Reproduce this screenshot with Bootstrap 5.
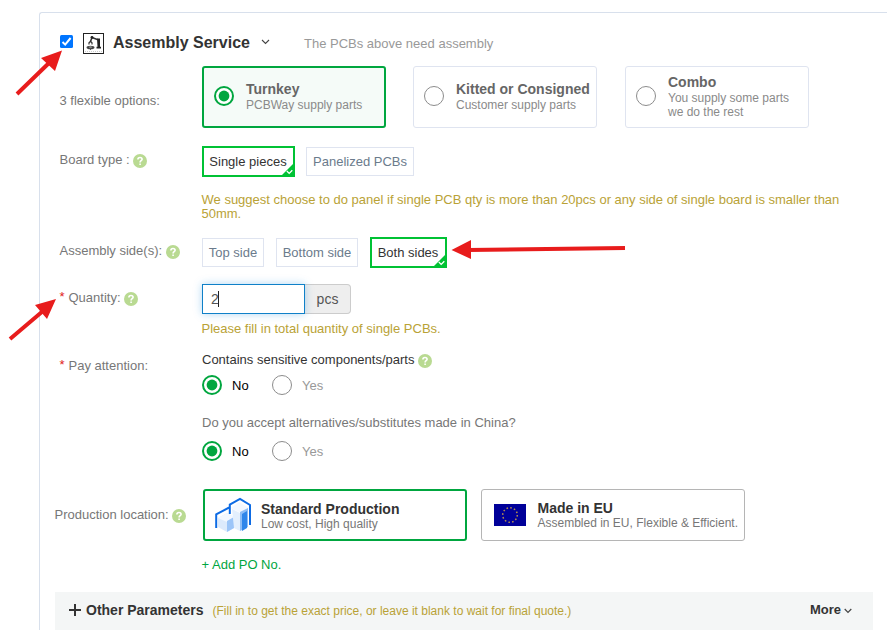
<!DOCTYPE html>
<html lang="en">
<head>
<meta charset="utf-8">
<meta name="viewport" content="width=device-width, initial-scale=1">
<title>Assembly Service</title>
<link href="https://cdn.jsdelivr.net/npm/bootstrap@5.3.0/dist/css/bootstrap.min.css" rel="stylesheet">
<style>
body{font-family:"Liberation Sans",Arial,sans-serif;font-size:13px;line-height:14px;color:#777;background:#fff;height:630px}
.panel{margin:12px 0 0 39px;height:618px;border:1px solid #d8e0ec;border-width:1px 0 0 1px;border-top-left-radius:3px}
.head{height:53px;padding:6px 0 0 20px}
.tickbox{width:13px;height:13px;margin:-3px 10px 0 0}
.robot{margin-top:1px}
.head h1{font-size:16px;line-height:20px;color:#333;margin:0 11px 0 9px}
.headchev{margin-top:-1px}
.note{color:#999;margin:2px 0 0 34px}
.line{padding-left:19.5px}
.lbl{width:142.5px;flex:none}
.help{width:14px;height:14px;margin-left:3.5px;flex:none}
.lbl .help{margin-top:2px}
.req{color:#e02020;width:9px;line-height:12px}
.opt-lbl{padding-top:28px}
.opts{gap:27px}
.opts .opt+.opt+.opt{margin-left:1px}
.opt{width:184px;height:62px;border:1px solid #dfe4f0;border-radius:3px;font-size:12px;padding-left:10px;color:#8a8a8a}
.opt.on{border:2px solid #00a63f;background:#f5fbf8}
.opt b{display:block;font-size:14px;line-height:16px;height:17px;color:#666}
.opt .dot{margin-bottom:2px}
.tx{margin:0 0 1px 12px}
.dot{width:20px;height:20px;flex:none}
.pick{height:29px;border:1px solid #dfe4f0;color:#6b7b8c;white-space:nowrap}
.pick.on{height:31px;border:2px solid #00c234;color:#333;padding-right:1px}
.pick svg{right:-1px;bottom:-1px;width:13px;height:13px}
.w93{width:93px}.w108{width:108px}.w62{width:62px}.w82{width:82px}.w77{width:77px}
.board{margin-top:18px}
.board .pick+.pick{margin-left:11px}
.board .lbl,.sides .lbl{margin-top:-2px}
.quantity .lbl{margin-top:-1px}
.board .help,.sides .help,.quantity .help{margin-top:1px}
.first{margin:16px 0 0 161.5px}
.sides{margin-top:16px}
.sides .pick+.pick{margin-left:12px}
.hint{color:#b9a236}
.quantity{margin-top:16px}
.qty{width:103px;height:30px;border:1px solid #0f80c8;box-shadow:0 0 8px rgba(30,140,220,.35);color:#555;font-size:14px;padding-left:8px;z-index:1}
.caret{width:1px;height:16px;background:#222;margin-left:-1px}
.unit{width:46px;height:30px;border:1px solid #ccc;border-left:0;border-radius:0 4px 4px 0;background:#eee;color:#555;font-size:14px}
.second{margin:8px 0 0 161.5px}
.attention{margin-top:17px}
.attention>.lbl{padding-top:6px}
.dark{color:#333}
.attention .help{margin-top:1px;margin-bottom:-1px}
.radios{margin-top:8px;color:#999}
.choice{width:70px;height:20px}
.choice span{margin:1px 0 0 10px}
.ask{margin-top:21px}
.second-set{margin-top:11px}
.production{margin-top:28px;padding-left:14.5px}
.production .lbl{width:148.5px}
.production .lbl .help{margin-top:1px}
.loc{width:264px;height:52px;border:1px solid #b5b5b5;border-radius:3px;font-size:12px;color:#777;white-space:nowrap}
.loc.on{border:2px solid #00a63f}
.loc b{display:block;font-size:14px;line-height:16px;color:#333}
.loc svg{margin:0 10px}
.loc.on div{margin-top:1px}
.eu{margin-left:14px}
.eu svg{margin:0 12px}
.eu div{margin-left:-.5px}
.po{margin:17px 0 0 161.5px;color:#00a63f}
.bar{margin:20px 14px 0 15px;height:38px;background:#f4f6f6;padding:0 21px 2px 14px;color:#333}
.bar b{font-size:14px}
.bar .op{margin-left:4px}
.fill{font-size:12px;margin:1px 0 0 9px}
.bar .more{font-size:13px}
.mchev{margin:1px 0 0 3px}
.arrows{left:0;top:0;width:887px;height:630px;z-index:5;pointer-events:none}
</style>
<script src="https://cdn.jsdelivr.net/npm/bootstrap@5.3.0/dist/js/bootstrap.bundle.min.js"></script>
</head>
<body class="position-relative overflow-hidden">
<svg width="0" height="0" class="position-absolute">
  <symbol id="q" viewBox="0 0 14 14"><circle cx="7" cy="7" r="7" fill="#b9da92"/><path d="M4.900 5.500C4.900 4.100 5.800 3.500 7 3.500s2.100.7 2.100 1.800C9.100 6.700 7.100 6.800 7.100 8.400M7.100 9.500v1.500" fill="none" stroke="#fff" stroke-width="1.600"/></symbol>
  <symbol id="on" viewBox="0 0 20 20"><circle cx="10" cy="10" r="9" fill="#fff" stroke="#00a63f" stroke-width="2"/><circle cx="10" cy="10" r="5.400" fill="#00a63f"/></symbol>
  <symbol id="off" viewBox="0 0 20 20"><circle cx="10" cy="10" r="9.500" fill="#fff" stroke="#8c8c8c"/></symbol>
  <symbol id="tick" viewBox="0 0 13 13"><path d="M13 0v13H0z" fill="#00c234"/><path d="M5.800 8l2.400 2.400L11.300 7.300" fill="none" stroke="#fff" stroke-width="1.300"/></symbol>
</svg>

<main class="panel">
  <div class="head d-flex align-items-center">
    <svg class="tickbox" viewBox="0 0 13 13" role="checkbox" aria-checked="true"><rect width="13" height="13" rx="1.500" fill="#0075ff"/><path d="M2.500 7l2.700 2.600L10.600 3" fill="none" stroke="#fff" stroke-width="2"/></svg>
    <svg class="robot" width="21" height="21" viewBox="0 0 21 21"><rect x=".5" y=".5" width="20" height="20" fill="#fff" stroke="#222"/><path d="M2 18.500h17" stroke="#ccc" stroke-dasharray="1 1"/><path d="M7.500 8.500L9 4.500l6 2.300" fill="none" stroke="#333" stroke-width="1.600"/><path d="M14 5.500h3v8.300h1v1.700h-4.500v-1.700h1z" fill="#222"/><path d="M6 11.500V9.800L7.500 8.300 9 9.800v1.700" fill="none" stroke="#333" stroke-width="1.200"/><circle cx="9" cy="4.300" r="1.400" fill="#222"/><ellipse cx="7.500" cy="14.500" rx="4" ry="1.800" fill="#444"/><ellipse cx="7.500" cy="14" rx="1.500" ry=".5" fill="#ccc"/><path d="M7.500 15.500V17" stroke="#555"/></svg>
    <h1 class="fw-bold">Assembly Service</h1>
    <svg class="headchev" width="9" height="6" viewBox="0 0 9 6"><path d="M1 1l3.500 3.500L8 1" fill="none" stroke="#444" stroke-width="1.100"/></svg>
    <span class="note">The PCBs above need assembly</span>
  </div>

  <div class="line d-flex">
    <div class="lbl opt-lbl">3 flexible options:</div>
    <div class="d-flex opts">
      <div class="opt on d-flex align-items-center"><svg class="dot"><use href="#on"/></svg><div class="tx"><b>Turnkey</b>PCBWay supply parts</div></div>
      <div class="opt d-flex align-items-center"><svg class="dot"><use href="#off"/></svg><div class="tx"><b>Kitted or Consigned</b>Customer supply parts</div></div>
      <div class="opt d-flex align-items-center"><svg class="dot"><use href="#off"/></svg><div class="tx"><b>Combo</b>You supply some parts<br>we do the rest</div></div>
    </div>
  </div>

  <div class="line board d-flex align-items-center">
    <div class="lbl d-flex">Board type :<svg class="help"><use href="#q"/></svg></div>
    <div class="pick on w93 position-relative d-flex align-items-center justify-content-center">Single pieces<svg class="position-absolute"><use href="#tick"/></svg></div>
    <div class="pick w108 d-flex align-items-center justify-content-center">Panelized PCBs</div>
  </div>
  <div class="hint first">We suggest choose to do panel if single PCB qty is more than 20pcs or any side of single board is smaller than<br>50mm.</div>

  <div class="line sides d-flex align-items-center">
    <div class="lbl d-flex">Assembly side(s):<svg class="help"><use href="#q"/></svg></div>
    <div class="pick w62 d-flex align-items-center justify-content-center">Top side</div>
    <div class="pick w82 d-flex align-items-center justify-content-center">Bottom side</div>
    <div class="pick on w77 position-relative d-flex align-items-center justify-content-center">Both sides<svg class="position-absolute"><use href="#tick"/></svg></div>
  </div>

  <div class="line quantity d-flex align-items-center">
    <div class="lbl d-flex"><span class="req">*</span>Quantity:<svg class="help"><use href="#q"/></svg></div>
    <div class="qty position-relative d-flex align-items-center">2<span class="caret"></span></div>
    <div class="unit d-flex align-items-center justify-content-center">pcs</div>
  </div>
  <div class="hint second">Please fill in total quantity of single PCBs.</div>

  <div class="line attention d-flex">
    <div class="lbl d-flex"><span class="req">*</span>Pay attention:</div>
    <div>
      <div class="d-flex dark">Contains sensitive components/parts<svg class="help"><use href="#q"/></svg></div>
      <div class="d-flex radios">
        <div class="choice d-flex align-items-center text-black"><svg class="dot"><use href="#on"/></svg><span>No</span></div>
        <div class="choice d-flex align-items-center"><svg class="dot"><use href="#off"/></svg><span>Yes</span></div>
      </div>
      <div class="ask">Do you accept alternatives/substitutes made in China?</div>
      <div class="d-flex radios second-set">
        <div class="choice d-flex align-items-center text-black"><svg class="dot"><use href="#on"/></svg><span>No</span></div>
        <div class="choice d-flex align-items-center"><svg class="dot"><use href="#off"/></svg><span>Yes</span></div>
      </div>
    </div>
  </div>

  <div class="production d-flex align-items-center">
    <div class="lbl d-flex">Production location:<svg class="help"><use href="#q"/></svg></div>
    <div class="loc on d-flex align-items-center">
      <svg width="36" height="36" viewBox="0 0 36 36"><path d="M3 21l9-5 7 4v11l-7 4-9-5z" fill="#dceafc"/><path d="M3 21l9-5 7 4-7 5z" fill="#f3f8ff"/><path d="M12 24l7-4v11l-7 4z" fill="#9cc5f8"/><path d="M16 11l8-6 10 6-8 5z" fill="#f3f8ff"/><path d="M17 12l8 4v18l-6-3z" fill="#e3effd"/><path d="M25 15l8-4v19l-8 4z" fill="#8dbdf6"/><path d="M27 17l5-3v17l-5 3z" fill="#2f86ea"/><path d="M1.200 31V17.300L15.200 10M14.800 17V7.700L25 2l10 6v20" fill="none" stroke="#0d6be4" stroke-width="2"/></svg>
      <div><b>Standard Production</b>Low cost, High quality</div>
    </div>
    <div class="loc eu d-flex align-items-center">
      <svg width="32" height="22" viewBox="0 0 32 22"><path fill="#000099" d="M0 0h32v22H0z"/><circle cx="16" cy="11" r="7.300" fill="none" stroke="#b08c50" stroke-width="1.500" stroke-dasharray="1.600 2.222"/></svg>
      <div><b>Made in EU</b>Assembled in EU, Flexible &amp; Efficient.</div>
    </div>
  </div>
  <div class="po">+ Add PO No.</div>

  <div class="bar d-flex align-items-center">
    <svg width="13" height="13" viewBox="0 0 13 13"><path d="M6 0v12M0 6h12" stroke="#333" stroke-width="2"/></svg>
    <b class="op">Other Parameters</b>
    <span class="hint fill">(Fill in to get the exact price, or leave it blank to wait for final quote.)</span>
    <b class="more ms-auto">More</b>
    <svg class="mchev" width="8" height="6" viewBox="0 0 8 6"><path d="M.7 1L4 4.300 7.300 1" fill="none" stroke="#444" stroke-width="1.200"/></svg>
  </div>
</main>

<svg class="arrows position-absolute" viewBox="0 0 887 630" fill="#e81c1c" stroke="#e81c1c">
  <path d="M17 94L50 62M10 339L43 311M625 248L468 250" fill="none" stroke-width="4"/>
  <path d="M62 50.500L41 58l14 13zM56 299l-21 6 12 14zM451.500 250l19.500-10v19z" stroke="none"/>
</svg>
</body>
</html>
